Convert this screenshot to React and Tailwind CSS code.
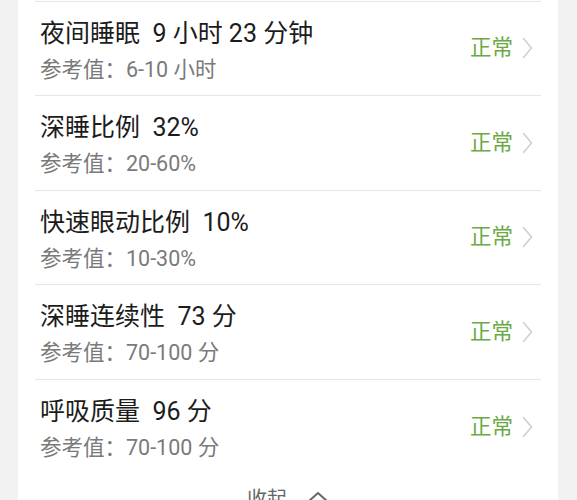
import React from 'react';

const ITEMS = [
  { name: '夜间睡眠', value: '9 小时 23 分钟', ref: '6-10 小时' },
  { name: '深睡比例', value: '32%', ref: '20-60%' },
  { name: '快速眼动比例', value: '10%', ref: '10-30%' },
  { name: '深睡连续性', value: '73 分', ref: '70-100 分' },
  { name: '呼吸质量', value: '96 分', ref: '70-100 分' },
];

const FONT = { fontFamily: 'Roboto, "Noto Sans CJK SC", sans-serif' };

function Chevron() {
  return (
    <svg width="11" height="22" viewBox="0 0 11 22" fill="none" className="ml-[9px]">
      <polyline points="1.5,1.5 9.5,11 1.5,20.5" stroke="#cfcfcf" strokeWidth="1.6" strokeLinecap="round" strokeLinejoin="round" />
    </svg>
  );
}

function Row({ item, last }) {
  return (
    <div className={`mx-[17px] h-[94.5px] flex justify-between ${last ? '' : 'border-b border-[#e6e6e6]'}`}>
      <div className="pl-[5px] pt-[14px]">
        <div className="text-[25px] leading-[36px] text-[#1c1c1c] whitespace-pre">
          {item.name}{'  '}{item.value}
        </div>
        <div className="text-[21.5px] leading-[30px] text-[#7a7a7a] mt-[3px]">
          参考值：{item.ref}
        </div>
      </div>
      <div className="flex items-center pr-[8px]">
        <span className="text-[21.5px] text-[#6aa944]">正常</span>
        <Chevron />
      </div>
    </div>
  );
}

export default function App() {
  return (
    <div className="w-[577px] h-[500px] bg-[#f2f2f2] overflow-hidden" style={FONT}>
      <div className="mx-[18px] w-[540px] bg-white h-[520px]">
        <div className="mx-[17px] h-[1.5px] border-b border-[#e6e6e6]" />
        {ITEMS.map((item, i) => (
          <Row key={item.name} item={item} last={i === ITEMS.length - 1} />
        ))}
        <div className="flex items-center justify-center pt-[10px]">
          <span className="text-[20px] leading-[30px] text-[#666]">收起</span>
          <svg width="22" height="12" viewBox="0 0 22 12" fill="none" className="ml-[20px] mt-[-4px]">
            <polyline points="1.5,10.5 11,2 20.5,10.5" stroke="#666" strokeWidth="2" strokeLinecap="round" strokeLinejoin="round" />
          </svg>
        </div>
      </div>
    </div>
  );
}
